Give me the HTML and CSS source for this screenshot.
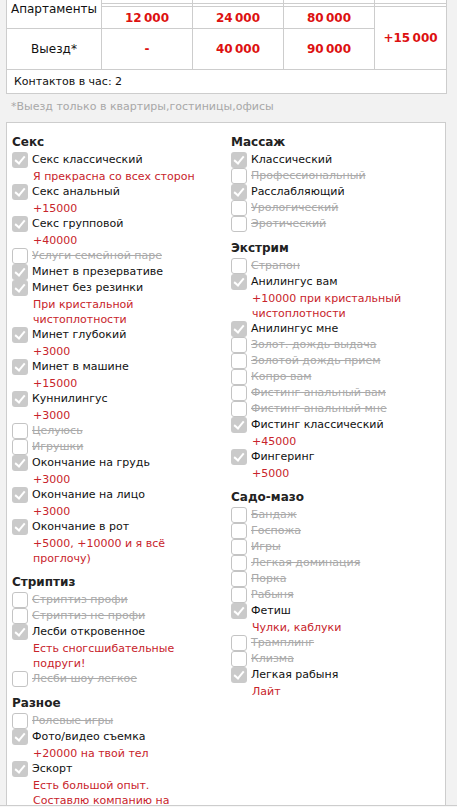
FILE: index.html
```html
<!DOCTYPE html>
<html lang="ru">
<head>
<meta charset="utf-8">
<title>Услуги</title>
<link rel="stylesheet" href="styles.css">
</head>
<body>
<div class="page">
  <table class="prices">
    <colgroup>
      <col class="c-label"><col class="c-p"><col class="c-p"><col class="c-p"><col class="c-extra">
    </colgroup>
    <tr class="r-head">
      <td class="label" rowspan="3">Апартаменты</td>
      <td></td><td></td><td></td><td></td>
    </tr>
    <tr class="r-thin">
      <td></td><td></td><td></td><td></td>
    </tr>
    <tr class="r-apt">
      <td class="price">12&#8201;000</td>
      <td class="price">24&#8201;000</td>
      <td class="price">80&#8201;000</td>
      <td class="price" rowspan="2">+15&#8201;000</td>
    </tr>
    <tr class="r-out">
      <td class="label">Выезд*</td>
      <td class="price">-</td>
      <td class="price">40&#8201;000</td>
      <td class="price">90&#8201;000</td>
    </tr>
    <tr class="r-contacts">
      <td class="contacts" colspan="5">Контактов в час: 2</td>
    </tr>
  </table>
  <p class="footnote">*Выезд только в квартиры,гостиницы,офисы</p>

  <div class="services">
    <div class="col">
      <div class="group">
        <h3 class="group-title">Секс</h3>
        <div class="item on"><span class="box"></span>Секс классический</div>
        <div class="note">Я прекрасна со всех сторон</div>
        <div class="item on"><span class="box"></span>Секс анальный</div>
        <div class="note">+15000</div>
        <div class="item on"><span class="box"></span>Секс групповой</div>
        <div class="note">+40000</div>
        <div class="item off"><span class="box"></span>Услуги семейной паре</div>
        <div class="item on"><span class="box"></span>Минет в презервативе</div>
        <div class="item on"><span class="box"></span>Минет без резинки</div>
        <div class="note">При кристальной чистоплотности</div>
        <div class="item on"><span class="box"></span>Минет глубокий</div>
        <div class="note">+3000</div>
        <div class="item on"><span class="box"></span>Минет в машине</div>
        <div class="note">+15000</div>
        <div class="item on"><span class="box"></span>Куннилингус</div>
        <div class="note">+3000</div>
        <div class="item off"><span class="box"></span>Целуюсь</div>
        <div class="item off"><span class="box"></span>Игрушки</div>
        <div class="item on"><span class="box"></span>Окончание на грудь</div>
        <div class="note">+3000</div>
        <div class="item on"><span class="box"></span>Окончание на лицо</div>
        <div class="note">+3000</div>
        <div class="item on"><span class="box"></span>Окончание в рот</div>
        <div class="note">+5000, +10000 и я всё проглочу)</div>
      </div>
      <div class="group">
        <h3 class="group-title">Стриптиз</h3>
        <div class="item off"><span class="box"></span>Стриптиз профи</div>
        <div class="item off"><span class="box"></span>Стриптиз не профи</div>
        <div class="item on"><span class="box"></span>Лесби откровенное</div>
        <div class="note">Есть сногсшибательные подруги!</div>
        <div class="item off"><span class="box"></span>Лесби шоу легкое</div>
      </div>
      <div class="group">
        <h3 class="group-title">Разное</h3>
        <div class="item off"><span class="box"></span>Ролевые игры</div>
        <div class="item on"><span class="box"></span>Фото/видео съемка</div>
        <div class="note">+20000 на твой тел</div>
        <div class="item on"><span class="box"></span>Эскорт</div>
        <div class="note">Есть большой опыт.<br>Составлю компанию на</div>
      </div>
    </div>
    <div class="col">
      <div class="group">
        <h3 class="group-title">Массаж</h3>
        <div class="item on"><span class="box"></span>Классический</div>
        <div class="item off"><span class="box"></span>Профессиональный</div>
        <div class="item on"><span class="box"></span>Расслабляющий</div>
        <div class="item off"><span class="box"></span>Урологический</div>
        <div class="item off"><span class="box"></span>Эротический</div>
      </div>
      <div class="group">
        <h3 class="group-title">Экстрим</h3>
        <div class="item off"><span class="box"></span>Страпон</div>
        <div class="item on"><span class="box"></span>Анилингус вам</div>
        <div class="note">+10000 при кристальный чистоплотности</div>
        <div class="item on"><span class="box"></span>Анилингус мне</div>
        <div class="item off"><span class="box"></span>Золот. дождь выдача</div>
        <div class="item off"><span class="box"></span>Золотой дождь прием</div>
        <div class="item off"><span class="box"></span>Копро вам</div>
        <div class="item off"><span class="box"></span>Фистинг анальный вам</div>
        <div class="item off"><span class="box"></span>Фистинг анальный мне</div>
        <div class="item on"><span class="box"></span>Фистинг классический</div>
        <div class="note">+45000</div>
        <div class="item on"><span class="box"></span>Фингеринг</div>
        <div class="note">+5000</div>
      </div>
      <div class="group">
        <h3 class="group-title">Садо-мазо</h3>
        <div class="item off"><span class="box"></span>Бандаж</div>
        <div class="item off"><span class="box"></span>Госпожа</div>
        <div class="item off"><span class="box"></span>Игры</div>
        <div class="item off"><span class="box"></span>Легкая доминация</div>
        <div class="item off"><span class="box"></span>Порка</div>
        <div class="item off"><span class="box"></span>Рабыня</div>
        <div class="item on"><span class="box"></span>Фетиш</div>
        <div class="note">Чулки, каблуки</div>
        <div class="item off"><span class="box"></span>Трамплинг</div>
        <div class="item off"><span class="box"></span>Клизма</div>
        <div class="item on"><span class="box"></span>Легкая рабыня</div>
        <div class="note">Лайт</div>
      </div>
    </div>
  </div>
</div>
<div class="bottom-bar"></div>
</body>
</html>
```

FILE: styles.css
```css
* { box-sizing: border-box; }

html, body {
  margin: 0;
  padding: 0;
  background: #f2f2f2;
}

body {
  font-family: "DejaVu Sans", Verdana, sans-serif;
  font-size: 11px;
  color: #111;
  overflow: hidden;
}

.page {
  padding: 0 11px 0 6px;
  margin-top: -12px;
}

/* price table */
.prices {
  width: 440px;
  border-collapse: collapse;
  background: #fff;
  table-layout: fixed;
}
.prices td {
  border: 1px solid #cdcdcd;
  padding: 0;
  text-align: center;
  vertical-align: middle;
}
.c-label { width: 95px; }
.c-p { width: 91px; }
.c-extra { width: 72px; }

.r-head td { height: 15px; }
.r-thin td { height: 3px; }
.r-apt td { height: 22px; }
.r-out td { height: 41px; }
.r-contacts td { height: 24px; }

.prices .label {
  font-size: 12px;
  color: #111;
}
.prices .price {
  font-size: 12px;
  font-weight: bold;
  color: #dd1111;
}
.prices .contacts {
  text-align: left;
  padding-left: 7px;
  font-size: 11px;
}

.footnote {
  margin: 0;
  padding: 6px 0 0 5px;
  height: 28px;
  font-size: 11px;
  color: #a8a8a8;
}

/* services */
.services {
  display: grid;
  grid-template-columns: 1fr 1fr;
  width: 440px;
  background: #fff;
  border: 1px solid #cdcdcd;
  padding-top: 12px;
}
.col {
  padding: 0 21px 0 5px;
}
.group + .group {
  margin-top: 9px;
}
.group-title {
  margin: 0 0 3px;
  font-size: 12px;
  line-height: 14px;
  font-weight: bold;
  color: #222;
}

.item {
  display: flex;
  align-items: center;
  gap: 4px;
  height: 16px;
  line-height: 16px;
  font-size: 11px;
  color: #111;
  white-space: nowrap;
}
.item.off {
  color: #aaa;
  text-decoration: line-through;
}
.box {
  flex: none;
  width: 16px;
  height: 16px;
  border-radius: 3px;
  position: relative;
}
.item.off .box {
  background: #fff;
  border: 1px solid #c4c4c4;
}
.item.on .box {
  background: #cacaca;
}
.item.on .box::after {
  content: "";
  position: absolute;
  left: 5px;
  top: 2px;
  width: 4px;
  height: 8px;
  border: solid #fff;
  border-width: 0 2px 2px 0;
  transform: rotate(40deg);
}

.note {
  padding: 1px 0 0 21px;
  line-height: 15px;
  font-size: 11px;
  color: #c8242b;
}

.bottom-bar {
  position: fixed;
  left: 0;
  right: 0;
  bottom: 0;
  height: 2px;
  border-top: 1px solid #cdcdcd;
  background: #f7f7f7;
}
```
